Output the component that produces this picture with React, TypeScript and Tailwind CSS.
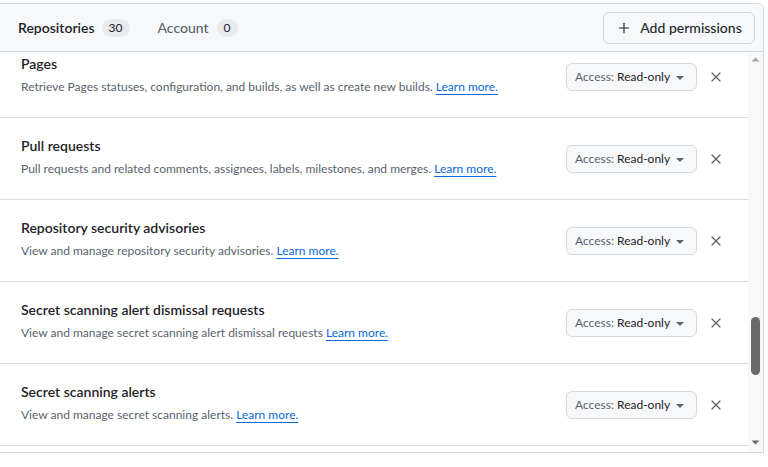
import React, { useLayoutEffect, useRef } from "react";
import { Plus, X } from "lucide-react";

type Permission = {
  title: string;
  description: string;
};

const permissions: Permission[] = [
  {
    title: "Pages",
    description: "Retrieve Pages statuses, configuration, and builds, as well as create new builds.",
  },
  {
    title: "Pull requests",
    description: "Pull requests and related comments, assignees, labels, milestones, and merges.",
  },
  {
    title: "Repository security advisories",
    description: "View and manage repository security advisories.",
  },
  {
    title: "Secret scanning alert dismissal requests",
    description: "View and manage secret scanning alert dismissal requests",
  },
  {
    title: "Secret scanning alerts",
    description: "View and manage secret scanning alerts.",
  },
  {
    title: "Secrets",
    description: "Manage Actions repository secrets.",
  },
];

const font = { fontFamily: "'Segoe UI', Lato, 'Noto Sans', sans-serif" };

const Counter = ({ value }: { value: number }) => (
  <span className="inline-flex h-[18px] min-w-[20px] items-center justify-center rounded-full bg-[#e7ebef] px-[7px] text-xs text-[#1f2328]">
    {value}
  </span>
);

const AccessSelect = () => (
  <button className="flex h-[28px] w-[131px] shrink-0 items-center justify-between whitespace-nowrap rounded-md border border-[#d1d9e0] bg-[#f6f8fa] pl-2 pr-2 text-[12px]">
    <span>
      <span className="text-[#59636e]">Access:</span> <span className="text-[#1f2328]">Read-only</span>
    </span>
    <svg width="16" height="16" viewBox="0 0 16 16" fill="#59636e">
      <path d="m4.427 7.427 3.396 3.396a.25.25 0 0 0 .354 0l3.396-3.396A.25.25 0 0 0 11.396 7H4.604a.25.25 0 0 0-.177.427Z" />
    </svg>
  </button>
);

const PermissionRow = ({ item }: { item: Permission }) => (
  <div className="flex h-[82px] shrink-0 items-center border-b border-[#d8dee4] pl-[21px] pr-4">
    <div className="mb-[4px] flex-1">
      <div className="text-[14px] font-semibold leading-5 text-[#1f2328]">{item.title}</div>
      <div className="mt-[4px] text-[12px] leading-[18px] text-[#59636e]">
        {item.description}{" "}
        <a className="text-[#0969da] underline underline-offset-[3px]">Learn more.</a>
      </div>
    </div>
    <AccessSelect />
    <button className="ml-[3px] flex h-8 w-8 items-center justify-center text-[#59636e]">
      <X size={16} strokeWidth={1.75} />
    </button>
  </div>
);

const ScrollBar = () => (
  <div className="flex w-[15px] shrink-0 flex-col items-center bg-[#f8f8f8]">
    <svg width="9" height="9" viewBox="0 0 9 9" className="mt-[3px]">
      <path d="M0.5 6.5 L4.5 2.5 L8.5 6.5 Z" fill="#a3a3a3" />
    </svg>
    <div className="mt-[253px] h-[58px] w-[9px] rounded-full bg-[#6b6b6b]" />
    <div className="flex-1" />
    <svg width="9" height="9" viewBox="0 0 9 9" className="mb-[5px]">
      <path d="M0.5 2.5 L8.5 2.5 L4.5 6.5 Z" fill="#6b6b6b" />
    </svg>
  </div>
);

export default function App() {
  const listRef = useRef<HTMLDivElement>(null);

  useLayoutEffect(() => {
    if (listRef.current) listRef.current.scrollTop = 16;
  }, []);

  return (
    <div className="h-[467px] w-[768px] overflow-hidden bg-white pr-[4px] pt-[3px]" style={font}>
      <div className="-ml-px overflow-hidden rounded-tr-md border border-[#d1d9e0]">
        <div className="flex h-[48px] items-center border-b border-[#d1d9e0] bg-[#f6f8fa] pl-[18px] pr-2">
          <div className="flex items-center gap-[7px]">
            <span className="text-[14px] font-semibold text-[#1f2328]">Repositories</span>
            <Counter value={30} />
          </div>
          <div className="ml-[28px] flex items-center gap-[8px]">
            <span className="text-[14px] font-medium text-[#59636e]">Account</span>
            <Counter value={0} />
          </div>
          <div className="flex-1" />
          <button className="flex h-[32px] w-[152px] items-center justify-center gap-2 rounded-md border border-[#d1d9e0] bg-[#f6f8fa] text-[14px] font-medium text-[#25292e]">
            <Plus size={16} strokeWidth={1.75} />
            Add permissions
          </button>
        </div>
        <div className="flex h-[400px]">
          <div ref={listRef} className="flex flex-1 flex-col overflow-hidden">
            {permissions.map((p) => (
              <PermissionRow key={p.title} item={p} />
            ))}
          </div>
          <ScrollBar />
        </div>
      </div>
    </div>
  );
}
